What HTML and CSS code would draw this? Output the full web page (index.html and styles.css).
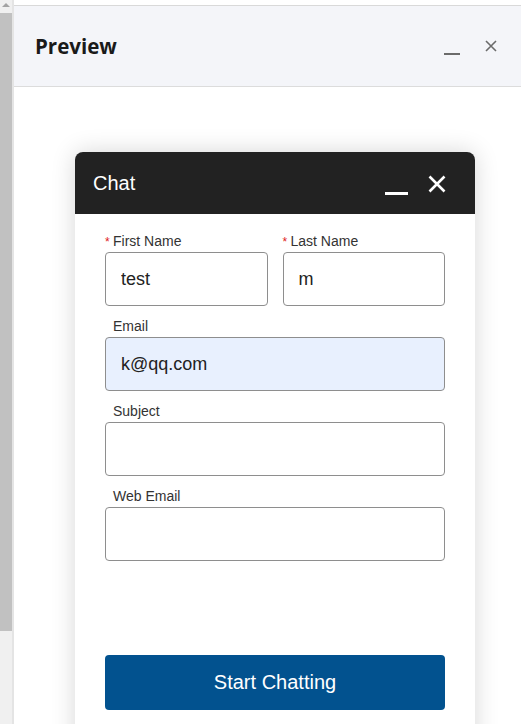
FILE: index.html
```html
<!DOCTYPE html>
<html lang="en">
<head>
    <meta charset="UTF-8">
    <meta name="viewport" content="width=device-width, initial-scale=1.0">
    <title>Preview</title>
    <link rel="stylesheet" href="styles.css">
</head>
<body>
    <div class="page">
        <div class="scrollbar">
            <div class="scroll-arrow"></div>
            <div class="scroll-thumb"></div>
        </div>

        <div class="main">
            <div class="top-strip"></div>
            <header class="preview-head">
                <h1>Preview</h1>
                <div class="head-icons">
                    <span class="min-icon"></span>
                    <svg class="close-icon" width="12" height="12" viewBox="0 0 12 12">
                        <path d="M1 1 L11 11 M11 1 L1 11" stroke="#6b6b6b" stroke-width="1.6" fill="none"/>
                    </svg>
                </div>
            </header>

            <div class="stage">
                <div class="chat">
                    <div class="chat-head">
                        <span class="chat-title">Chat</span>
                        <div class="chat-icons">
                            <span class="chat-min"></span>
                            <svg width="18" height="18" viewBox="0 0 18 18">
                                <path d="M1.5 1.5 L16.5 16.5 M16.5 1.5 L1.5 16.5" stroke="#fff" stroke-width="2.6" fill="none"/>
                            </svg>
                        </div>
                    </div>

                    <form class="chat-body">
                        <div class="row">
                            <div class="field">
                                <label class="req">First Name</label>
                                <input type="text" value="test">
                            </div>
                            <div class="field">
                                <label class="req">Last Name</label>
                                <input type="text" value="m">
                            </div>
                        </div>
                        <div class="field">
                            <label>Email</label>
                            <input type="text" class="filled" value="k@qq.com">
                        </div>
                        <div class="field">
                            <label>Subject</label>
                            <input type="text">
                        </div>
                        <div class="field">
                            <label>Web Email</label>
                            <input type="text">
                        </div>

                        <button type="button" class="start">Start Chatting</button>
                    </form>
                </div>
            </div>
        </div>
    </div>
</body>
</html>
```

FILE: styles.css
```css
body {
    margin: 0;
    background-color: #fff;
    font-family: 'Liberation Sans', Arial, sans-serif;
    overflow: hidden;
}

.page {
    display: flex;
    height: 724px;
    overflow: hidden;
}

.scrollbar {
    width: 12px;
    flex-shrink: 0;
    background-color: #f0f0f0;
    border-right: 2px solid #e4e4e4;
}

.scroll-arrow {
    width: 0;
    height: 0;
    margin: 3px auto 6px;
    border-left: 4px solid transparent;
    border-right: 4px solid transparent;
    border-bottom: 4px solid #a3a3a3;
}

.scroll-thumb {
    height: 618px;
    background-color: #c1c1c1;
}

.main {
    flex: 1;
    display: flex;
    flex-direction: column;
    overflow: hidden;
}

.top-strip {
    height: 5px;
    flex-shrink: 0;
}

.preview-head {
    height: 80px;
    flex-shrink: 0;
    background-color: #f4f5f9;
    border-top: 1px solid #d9d9d9;
    border-bottom: 1px solid #dcdcdc;
    display: flex;
    align-items: center;
    justify-content: space-between;
    padding: 0 24px 0 21px;
}

.preview-head h1 {
    margin: 0 0 1px;
    font-family: 'Open Sans', 'Noto Sans', sans-serif;
    font-weight: 700;
    font-size: 20.5px;
    color: #1a1a1a;
}

.head-icons {
    display: flex;
    align-items: center;
    gap: 25px;
}

.min-icon {
    display: block;
    width: 16px;
    height: 2px;
    margin-top: 16px;
    background-color: #6b6b6b;
}

.close-icon {
    display: block;
}

.stage {
    flex: 1;
    padding: 65px 0 0 61px;
}

.chat {
    width: 400px;
    height: 620px;
    background-color: #fff;
    border-radius: 8px 8px 0 0;
    box-shadow: 0 0 24px rgba(0, 0, 0, 0.16);
}

.chat-head {
    height: 62px;
    background-color: #222;
    border-radius: 8px 8px 0 0;
    display: flex;
    align-items: center;
    justify-content: space-between;
    padding: 0 29px 0 18px;
}

.chat-title {
    color: #fff;
    font-size: 20px;
}

.chat-icons {
    display: flex;
    align-items: center;
    gap: 20px;
}

.chat-icons svg {
    display: block;
    margin-top: 1px;
}

.chat-min {
    display: block;
    width: 23px;
    height: 3px;
    margin-top: 20px;
    background-color: #fff;
}

.chat-body {
    padding: 19px 30px 0;
}

.row {
    display: flex;
    gap: 15px;
}

.row .field {
    flex: 1;
}

.field {
    display: flex;
    flex-direction: column;
    margin-bottom: 12px;
}

.field label {
    position: relative;
    padding-left: 8px;
    margin-bottom: 3px;
    font-size: 14px;
    line-height: 16px;
    color: #333;
}

.req::before {
    content: "*";
    position: absolute;
    left: 0;
    top: 1px;
    color: #e02020;
    font-size: 12px;
}

.field input {
    height: 54px;
    flex-shrink: 0;
    box-sizing: border-box;
    border: 1px solid #8e8e8e;
    border-radius: 4px;
    padding: 0 15px;
    font-family: 'Liberation Sans', Arial, sans-serif;
    font-size: 18px;
    color: #222;
    background-color: #fff;
    width: 100%;
}

.field input.filled {
    background-color: #e8f0fe;
}

.start {
    display: block;
    width: 100%;
    height: 55px;
    margin-top: 94px;
    border: none;
    border-radius: 4px;
    background-color: #02528f;
    color: #fff;
    font-family: 'Liberation Sans', Arial, sans-serif;
    font-size: 20px;
}
```
